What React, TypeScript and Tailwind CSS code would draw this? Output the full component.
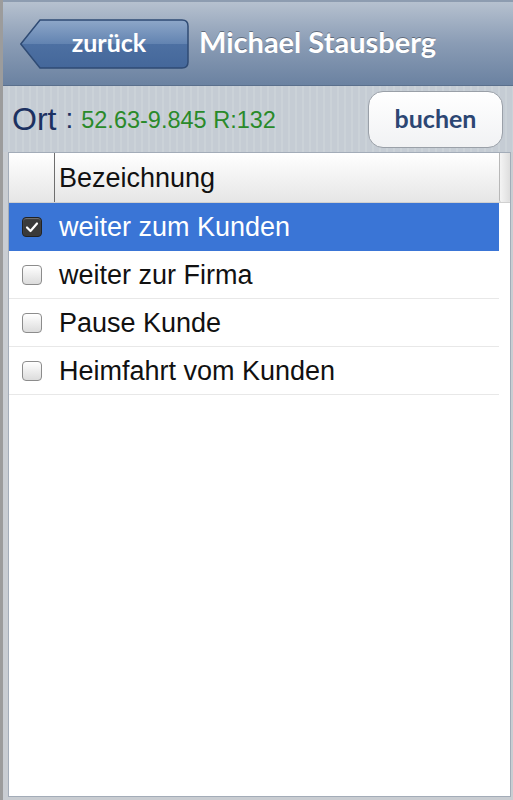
import React from "react";

const rows = [
  { label: "weiter zum Kunden", checked: true },
  { label: "weiter zur Firma", checked: false },
  { label: "Pause Kunde", checked: false },
  { label: "Heimfahrt vom Kunden", checked: false },
];

function Check({ checked }: { checked: boolean }) {
  if (checked) {
    return (
      <div className="w-[20px] h-[20px] rounded-[4px] bg-[#3a3a3a] border border-[#222] flex items-center justify-center shadow-[inset_0_1px_1px_rgba(255,255,255,0.3)]">
        <svg width="14" height="12" viewBox="0 0 14 12">
          <path d="M2 6.5 L5.5 10 L12 2.5" fill="none" stroke="#fff" strokeWidth="2.2" strokeLinecap="round" strokeLinejoin="round" />
        </svg>
      </div>
    );
  }
  return (
    <div className="w-[20px] h-[20px] rounded-[4px] border border-[#8c8c8c] bg-gradient-to-b from-[#ffffff] to-[#dcdcdc]" />
  );
}

export default function App() {
  return (
    <div className="w-[513px] h-[800px] flex flex-col bg-[#c9cdd2] border-l-[3px] border-l-[#9c9c9c] overflow-hidden" style={{ fontFamily: "'Liberation Sans', Arial, sans-serif" }}>
      {/* Header */}
      <div className="h-[86px] shrink-0 flex items-center bg-gradient-to-b from-[#b6c1cf] via-[#8a9cb5] to-[#6b82a1] border-t-[2px] border-t-[#8d9cb0] border-b border-b-[#5a6f8c]">
        <button className="relative ml-[17px] w-[169px] h-[50px] flex items-center justify-center">
          <svg className="absolute inset-0" width="169" height="50" viewBox="0 0 169 50">
            <defs>
              <linearGradient id="bk" x1="0" y1="0" x2="0" y2="1">
                <stop offset="0" stopColor="#8ea7c9" />
                <stop offset="0.5" stopColor="#6283b1" />
                <stop offset="0.5" stopColor="#4d70a2" />
                <stop offset="1" stopColor="#44679a" />
              </linearGradient>
            </defs>
            <path d="M0.8 25 L20 1 L162 1 Q168 1 168 7 L168 43 Q168 49 162 49 L20 49 Z" fill="url(#bk)" stroke="#2f4b74" strokeWidth="1.5" />
          </svg>
          <span className="relative text-white font-bold text-[25px] pl-[9px] -mt-[1px]" style={{ fontFamily: "Lato, 'Open Sans', sans-serif" }}>zurück</span>
        </button>
        <div className="ml-[10px] text-white font-bold text-[29px] -mt-[4px] [text-shadow:0_-1px_0_rgba(0,0,0,0.35)]" style={{ fontFamily: "Lato, 'Open Sans', sans-serif" }}>
          Michael Stausberg
        </div>
      </div>

      {/* Ort row */}
      <div className="h-[66px] shrink-0 flex items-center bg-[repeating-linear-gradient(90deg,#c5ccd4_0px,#c5ccd4_5px,#cbd2d8_5px,#cbd2d8_7px)]">
        <span className="ml-[9px] text-[32px] text-[#1c3161]">Ort</span>
        <span className="ml-[9px] text-[28px] text-[#1c3161]">:</span>
        <span className="ml-[8px] text-[23.5px] text-[#2a8a2a] mt-[4px]">52.63-9.845 R:132</span>
        <button className="ml-auto mr-[10px] w-[135px] h-[57px] rounded-[15px] border border-[#9aa0a8] bg-gradient-to-b from-[#ffffff] to-[#f1f2f4] text-[#2c4673] font-bold text-[25px]" style={{ fontFamily: "Lato, 'Open Sans', sans-serif" }}>
          buchen
        </button>
      </div>

      {/* Grid */}
      <div className="flex-1 ml-[5px] mr-[2px] mb-[3px] bg-white border border-[#a3acb8] flex flex-col">
        <div className="h-[50px] shrink-0 flex bg-gradient-to-b from-[#ffffff] to-[#e6e6e6] border-b border-b-[#d0d0d0]">
          <div className="w-[46px] border-r border-r-[#6e6e6e]" />
          <div className="flex-1 flex items-center pl-[4px] pt-[2px] text-[27px] text-[#111]">Bezeichnung</div>
          <div className="w-[11px] border-l border-[#b8b8b8] bg-gradient-to-r from-[#f4f4f4] to-[#dedede] rounded-b-[2px]" />
        </div>
        <div className="flex flex-col mr-[11px]">
          {rows.map((r) => (
            <div key={r.label} className={`h-[48px] flex items-center border-b ${r.checked ? "bg-[#3a75d6] border-b-[#3a75d6] text-white" : "border-b-[#e8e8e8] text-[#111]"}`}>
              <div className="w-[46px] flex justify-center">
                <Check checked={r.checked} />
              </div>
              <span className="pl-[4px] pt-[1px] text-[27px]">{r.label}</span>
            </div>
          ))}
        </div>
      </div>
    </div>
  );
}
